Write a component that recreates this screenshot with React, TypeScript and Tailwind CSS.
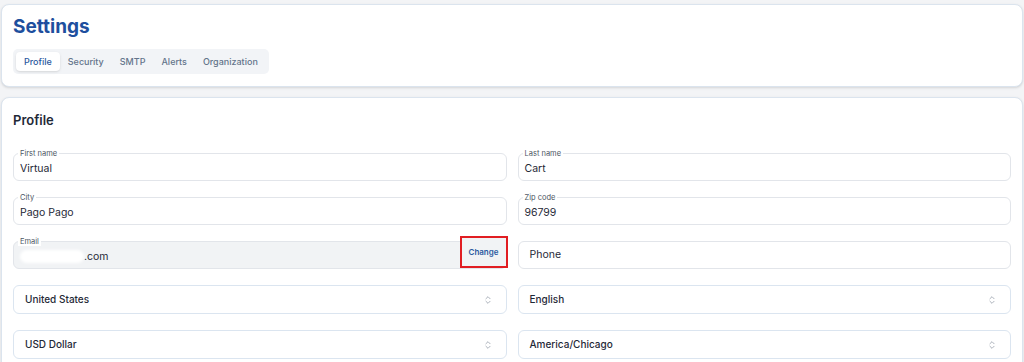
import React from "react";

const font = { fontFamily: "Inter, 'Noto Sans', sans-serif" };

function UpDown() {
  return (
    <svg width="10" height="10" viewBox="0 0 24 24" fill="none" stroke="#9ca3af" strokeWidth="2" strokeLinecap="round" strokeLinejoin="round">
      <path d="m7 15 5 5 5-5" />
      <path d="m7 9 5-5 5 5" />
    </svg>
  );
}

function LabeledInput({ label, value }: { label: string; value: string }) {
  return (
    <div className="relative h-[28px] rounded-[6px] border border-[#e2e5ea] bg-white flex items-center px-[6px]">
      <span className="absolute left-[4px] top-[-5px] bg-white px-[2px] text-[7.5px] leading-[9px] text-[#4b5563]">{label}</span>
      <span className="text-[10.5px] text-[#1f2937] pt-[3px]">{value}</span>
    </div>
  );
}

function SelectBox({ value }: { value: string }) {
  return (
    <div className="h-[29px] rounded-[6px] border border-[#dbe5f0] bg-white flex items-center justify-between pl-[11px] pr-[13px]">
      <span className="text-[10px] font-medium text-[#1f2937]">{value}</span>
      <UpDown />
    </div>
  );
}

export default function App() {
  const tabs = ["Profile", "Security", "SMTP", "Alerts", "Organization"];
  return (
    <div className="min-h-[362px] bg-[#f3f4f6] pt-[4px] pl-[1px] pr-[1px] flex flex-col gap-[10px]" style={font}>
      <div className="rounded-[8px] border border-[#dbe4ee] bg-white shadow-sm px-[11px] pt-[9px] pb-[12px]">
        <h1 className="text-[19px] leading-[24px] font-bold text-[#1e4f9e] mb-[8px] mt-[1px]">Settings</h1>
        <div className="inline-flex items-center rounded-[5px] bg-[#f2f4f7] p-[3px] h-[25px]">
          {tabs.map((t, i) => (
            <div
              key={t}
              className={
                i === 0
                  ? "h-[19px] flex items-center px-[8px] rounded-[4px] bg-white shadow-sm text-[9px] font-medium text-[#2c5aa0]"
                  : "h-[19px] flex items-center px-[8px] text-[9px] font-medium text-[#64748b]"
              }
            >
              {t}
            </div>
          ))}
        </div>
      </div>

      <div className="rounded-[8px] border border-[#dbe4ee] bg-white shadow-sm px-[11px] pt-[12px] pb-[20px]">
        <h2 className="text-[13px] leading-[20px] font-semibold text-[#1f2937] mb-[23px]">Profile</h2>
        <div className="grid grid-cols-2 gap-x-[11px] gap-y-[16px]">
          <LabeledInput label="First name" value="Virtual" />
          <LabeledInput label="Last name" value="Cart" />
          <LabeledInput label="City" value="Pago Pago" />
          <LabeledInput label="Zip code" value="96799" />
          <div className="relative h-[28px] rounded-[6px] border border-[#e2e5ea] bg-[#f1f3f5] flex items-center justify-between pl-[6px]">
            <span className="absolute left-[4px] top-[-5px] bg-white px-[2px] text-[7.5px] leading-[9px] text-[#4b5563]">Email</span>
            <span className="flex items-center pt-[3px]">
              <span className="inline-block w-[64px] h-[13px] rounded-full bg-white blur-[1.5px]" />
              <span className="text-[10.5px] text-[#1f2937]">.com</span>
            </span>
            <span className="relative top-[-3px] right-[-2px] h-[32px] w-[48px] border-2 border-[#e11d22] flex items-center justify-center text-[8px] font-semibold text-[#2c5aa0] bg-[#f1f3f5]">
              Change
            </span>
          </div>
          <div className="h-[28px] rounded-[6px] border border-[#e2e5ea] bg-white flex items-center px-[11px]">
            <span className="text-[10.5px] text-[#1f2937]">Phone</span>
          </div>
          <SelectBox value="United States" />
          <SelectBox value="English" />
          <SelectBox value="USD Dollar" />
          <SelectBox value="America/Chicago" />
        </div>
      </div>
    </div>
  );
}
